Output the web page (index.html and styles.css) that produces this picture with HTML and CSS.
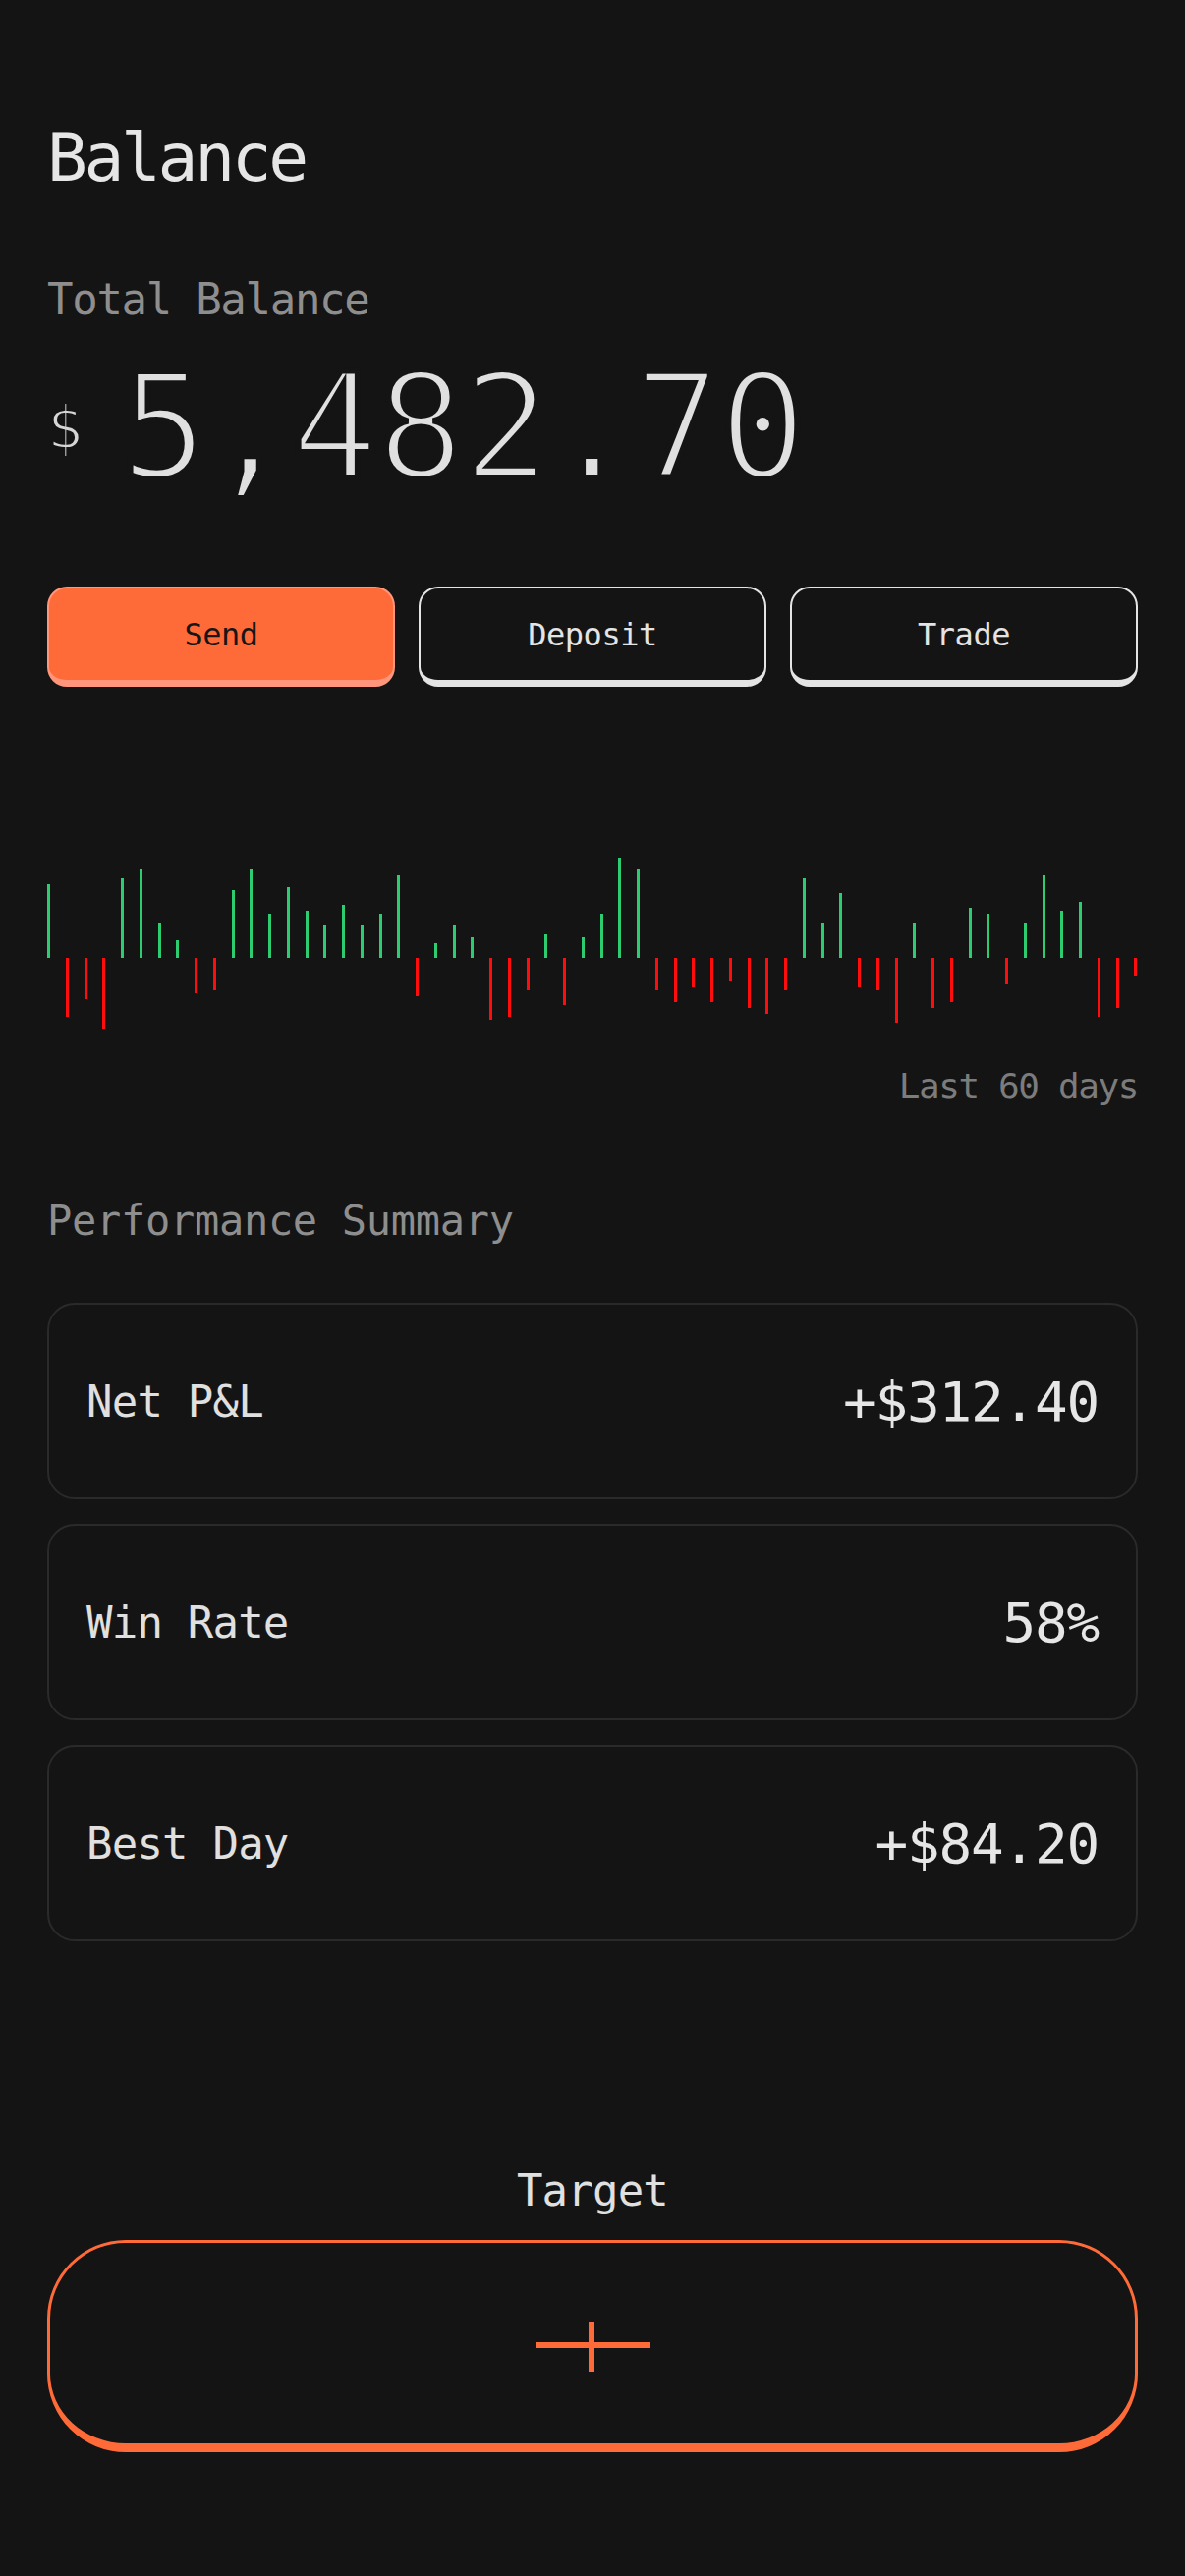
FILE: index.html
```html
<!DOCTYPE html>
<html lang="en">
<head>
  <meta charset="UTF-8" />
  <meta name="viewport" content="width=device-width, initial-scale=1.0"/>
  <title>Balance</title>
  <link rel="stylesheet" href="styles.css">
</head>
<body>
  <main class="screen">
    <h1 class="title">Balance</h1>

    <div class="total-label">Total Balance</div>
    <div class="amount">
      <span class="currency">$</span>
      <span class="value">5,482.70</span>
    </div>

    <div class="actions">
      <button class="btn btn-primary">Send</button>
      <button class="btn">Deposit</button>
      <button class="btn">Trade</button>
    </div>

    <div class="chart" id="chart"></div>
    <div class="chart-caption">Last 60 days</div>

    <h2 class="section-title">Performance Summary</h2>
    <div class="stats">
      <div class="stat-card">
        <span class="stat-label">Net P&amp;L</span>
        <span class="stat-value">+$312.40</span>
      </div>
      <div class="stat-card">
        <span class="stat-label">Win Rate</span>
        <span class="stat-value">58%</span>
      </div>
      <div class="stat-card">
        <span class="stat-label">Best Day</span>
        <span class="stat-value">+$84.20</span>
      </div>
    </div>

    <div class="target-label">Target</div>
    <button class="target-btn" aria-label="Add target">
      <svg width="117" height="51" viewBox="0 0 117 51">
        <rect x="0" y="21" width="117" height="6" fill="#ff6b38"/>
        <rect x="54" y="0" width="6" height="51" fill="#ff6b38"/>
      </svg>
    </button>
  </main>

  <script>
    // daily pnl, last 60 days (px)
    const days = [
      75, -60, -42, -72, 81, 90, 36, 18, -36, -33,
      69, 90, 45, 72, 48, 33, 54, 33, 45, 84,
      -39, 15, 33, 21, -63, -60, -33, 24, -48, 21,
      45, 102, 90, -33, -45, -30, -45, -24, -51, -57,
      -33, 81, 36, 66, -30, -33, -66, 36, -51, -45,
      51, 45, -27, 36, 84, 48, 57, -60, -51, -18
    ];

    const chart = document.getElementById('chart');
    days.forEach(v => {
      const col = document.createElement('div');
      col.className = 'bar-col';
      const up = document.createElement('div');
      up.className = 'half up';
      const down = document.createElement('div');
      down.className = 'half down';
      const bar = document.createElement('div');
      bar.className = 'bar ' + (v >= 0 ? 'gain' : 'loss');
      bar.style.height = Math.abs(v) + 'px';
      (v >= 0 ? up : down).appendChild(bar);
      col.appendChild(up);
      col.appendChild(down);
      chart.appendChild(col);
    });
  </script>
</body>
</html>
```

FILE: styles.css
```css
* {
  margin: 0;
  padding: 0;
  box-sizing: border-box;
}

body {
  background-color: #141414;
  color: #e2e2e2;
  font-family: "DejaVu Sans Mono", "Liberation Mono", monospace;
}

.screen {
  padding: 127px 48px 0;
}

.title {
  font-size: 68px;
  line-height: 68px;
  letter-spacing: -3.4px;
  font-weight: normal;
  color: #e6e6e6;
}

.total-label {
  margin-top: 88px;
  font-size: 44px;
  line-height: 44px;
  letter-spacing: -1.3px;
  color: #8e8e8e;
}

.amount {
  margin-top: 34px;
  display: flex;
  align-items: center;
  gap: 38px;
  color: #e0e0e0;
}

.currency {
  font-size: 60px;
  line-height: 60px;
  -webkit-text-stroke: 2px #141414;
  color: #d6d6d6;
}

.value {
  font-size: 148px;
  line-height: 148px;
  letter-spacing: -2px;
  -webkit-text-stroke: 6px #141414;
}

.actions {
  margin-top: 88px;
  display: grid;
  grid-template-columns: repeat(3, 1fr);
  gap: 24px;
}

.btn {
  height: 102px;
  border: 2px solid #e4e4e4;
  border-bottom-width: 7px;
  border-radius: 20px;
  background-color: #141414;
  color: #e4e4e4;
  font-family: inherit;
  font-size: 32px;
  letter-spacing: -0.5px;
  cursor: pointer;
}

.btn-primary {
  background-color: #ff6b38;
  border-color: #ff957a;
  color: #161616;
}

.chart {
  margin-top: 171px;
  height: 210px;
  display: flex;
  justify-content: space-between;
}

.bar-col {
  width: 3px;
  display: flex;
  flex-direction: column;
}

.half {
  height: 105px;
  display: flex;
}

.up {
  align-items: flex-end;
}

.down {
  align-items: flex-start;
}

.bar {
  width: 3px;
}

.gain {
  background-color: #2ecc71;
}

.loss {
  background-color: #ff0d0d;
}

.chart-caption {
  margin-top: 8px;
  font-size: 36px;
  line-height: 36px;
  letter-spacing: -1.4px;
  text-align: right;
  color: #7c7c7c;
}

.section-title {
  margin-top: 98px;
  font-size: 42px;
  line-height: 42px;
  letter-spacing: -0.3px;
  font-weight: normal;
  color: #8e8e8e;
}

.stats {
  margin-top: 62px;
  display: flex;
  flex-direction: column;
  gap: 25px;
}

.stat-card {
  height: 200px;
  border: 2px solid #2a2a2a;
  border-radius: 28px;
  padding: 0 38px;
  display: flex;
  align-items: center;
  justify-content: space-between;
}

.stat-label {
  font-size: 44px;
  letter-spacing: -0.8px;
  color: #e0e0e0;
}

.stat-value {
  font-size: 56px;
  letter-spacing: -1.2px;
  color: #e6e6e6;
}

.target-label {
  margin-top: 232px;
  font-size: 44px;
  line-height: 44px;
  letter-spacing: -0.8px;
  text-align: center;
  color: #e0e0e0;
}

.target-btn {
  margin-top: 28px;
  width: 100%;
  height: 216px;
  border: 3px solid #ff6b38;
  border-bottom-width: 9px;
  border-radius: 80px;
  background-color: #141414;
  display: flex;
  align-items: center;
  justify-content: center;
  cursor: pointer;
}

.target-btn svg {
  margin-top: 6px;
}
```
